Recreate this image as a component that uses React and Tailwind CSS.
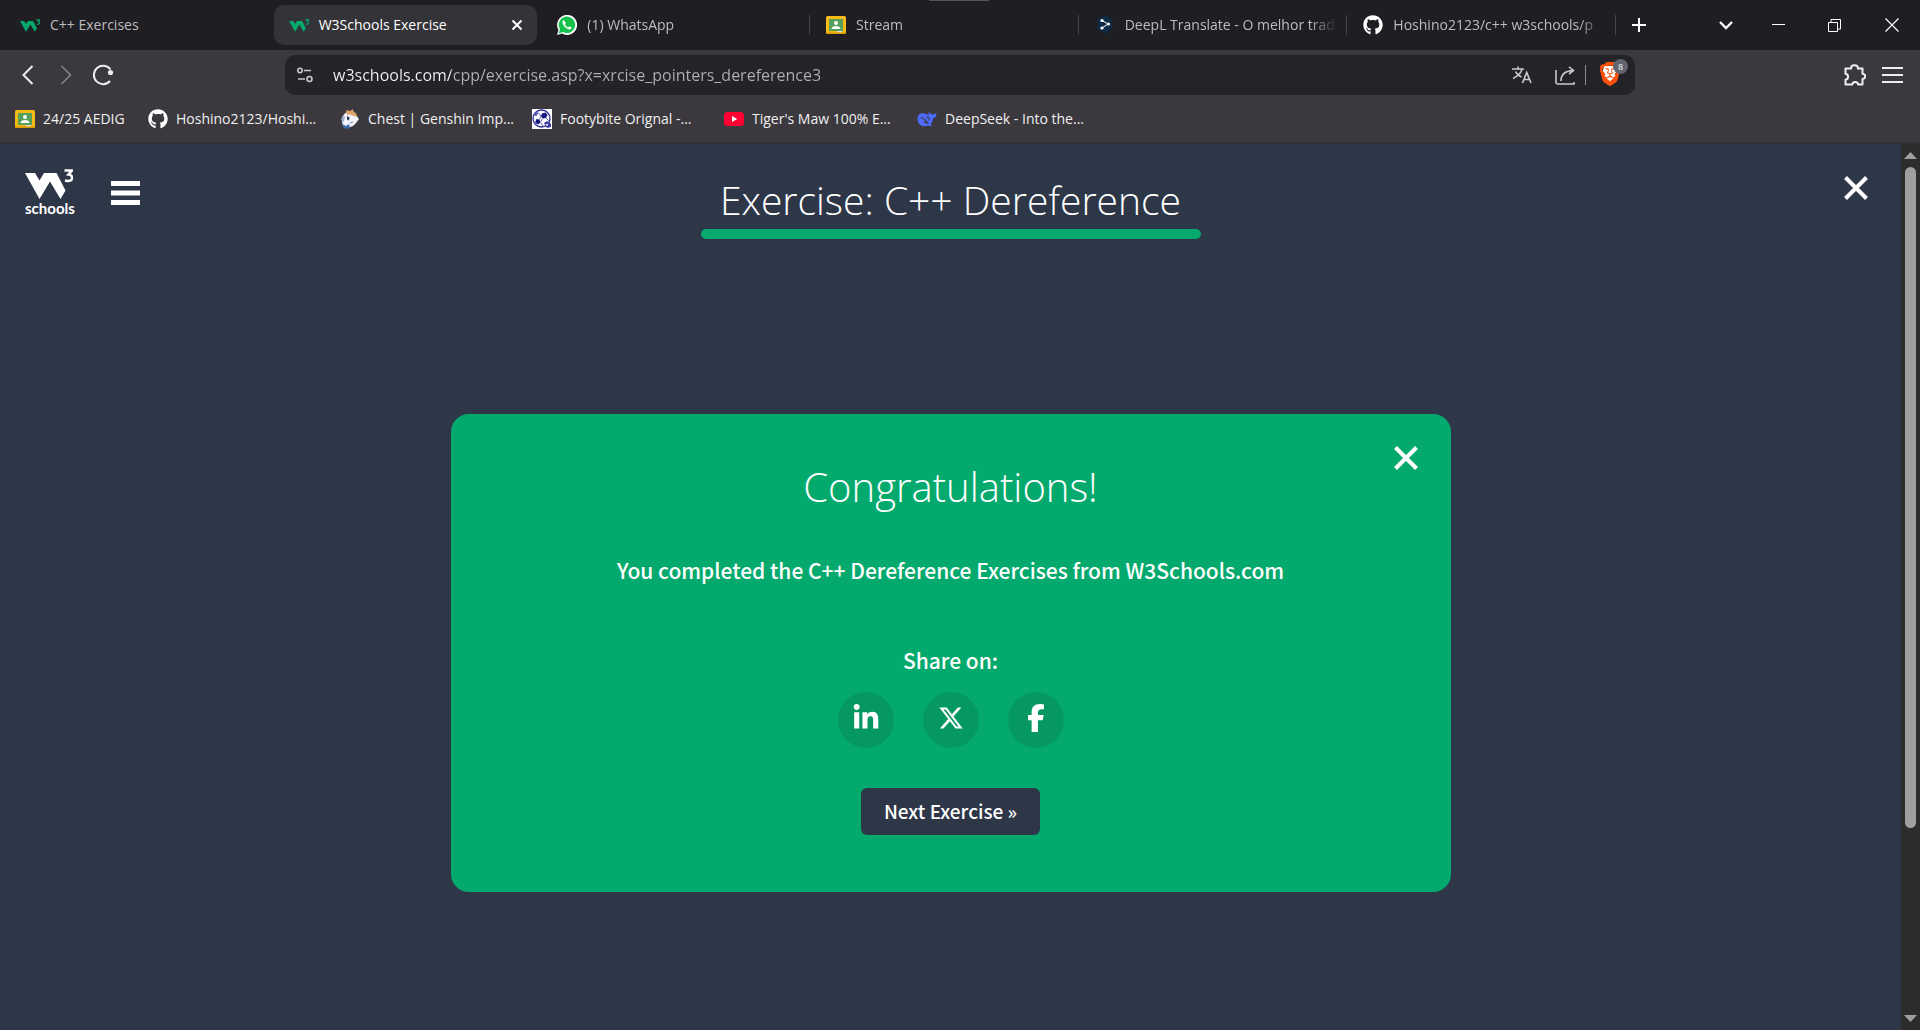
import React from "react";
import { FaGithub, FaLinkedinIn, FaXTwitter, FaFacebookF } from "react-icons/fa6";
import { SiBrave } from "react-icons/si";

function W3Mark({ className }) {
  return (
    <svg viewBox="0 0 48 30" className={className} fill="currentColor" aria-hidden="true">
      <path d="M0 4H10L14.500 11.500L19 4H31.500L40.500 21.500L35.500 30L25 12.500L14.500 30Z" />
      <path d="M39.500 1.500H47L43.500 5.500Q47.500 6 47 9.500Q46 13 40 11.500" fill="none" stroke="currentColor" strokeWidth="2.600" />
    </svg>
  );
}

const W3Icon = () => <W3Mark className="h-[15px] w-5 text-[#04aa6d]" />;

const ClassroomIcon = () => (
  <svg viewBox="0 0 20 18" className="h-[18px] w-5" aria-hidden="true">
    <rect width="20" height="18" rx="1.500" fill="#f5ba14" />
    <rect x="3" y="3" width="14" height="12" fill="#57a05a" />
    <circle cx="10" cy="7" r="2" fill="#fff" />
    <path d="M5.500 13q.5-3 4.500-3t4.500 3z" fill="#fff" />
    <path d="M11 15h5v1.500h-5z" fill="#e0e0e0" />
    <path d="M0 16.500h20V17q0 1-1.500 1H1.500Q0 18 0 17z" fill="#d99a00" />
  </svg>
);

const WhatsAppIcon = () => (
  <svg viewBox="0 0 20 20" className="size-5" aria-hidden="true">
    <path d="M0 20l1.500-5A10 10 0 1 1 5 18.500z" fill="#fff" />
    <path d="M1.800 18.200l1.200-4A8.200 8.200 0 1 1 6 17z" fill="#12c04a" />
    <path d="M7 5.300c-.7 0-1.700.8-1.500 2.300.4 3 3.500 6.400 6.700 6.800 1.300.1 2.400-.8 2.400-2l-2.300-1.200-1.100 1.200c-1.400-.5-2.700-1.700-3.300-3.200L9 8z" fill="#fff" />
  </svg>
);

const DeepLIcon = () => (
  <svg viewBox="0 0 18 20" className="h-5 w-[18px]" aria-hidden="true">
    <path d="M9 0.500l7.500 4v9L11 17v2.500L9 18l-7.500-4.500v-9z" fill="#0f2b46" />
    <path d="M6 5.500l6 3.500-6 4" fill="none" stroke="#fff" strokeWidth="1" />
    <circle cx="6" cy="5.500" r="1.600" fill="#fff" />
    <circle cx="12.500" cy="9" r="1.600" fill="#fff" />
    <circle cx="6" cy="13" r="1.600" fill="#fff" />
  </svg>
);

const GitHubIcon = () => <FaGithub className="size-5 text-white" aria-hidden="true" />;

const ChestIcon = () => (
  <svg viewBox="0 0 20 20" className="size-5" aria-hidden="true">
    <path d="M2 13Q1 7 6 3.500Q11 2 15 5L19 10L16 14L13 17Q6 20 3 17z" fill="#f3f3fb" />
    <path d="M6 1l4 1 3-2 .5 2.500L17 5l-1 .5L18 8l-4-1-4-1.500L7 6z" fill="#dda46a" />
    <path d="M1 10l3-4 1 3-2 5z" fill="#9db1cf" />
    <path d="M2 15l4 2 3-2 1 4q-5 2-7-1z" fill="#3b6db0" />
    <path d="M7 7l2.500 1.500-.5 3-2-1z" fill="#28365c" />
    <path d="M10 14l3-1" stroke="#6f7ea6" fill="none" />
  </svg>
);

const FootyIcon = () => (
  <svg viewBox="0 0 20 20" className="size-5" aria-hidden="true">
    <rect width="20" height="20" fill="#fff" />
    <circle cx="9.500" cy="9.500" r="8.500" fill="#fff" stroke="#2a2a9a" strokeWidth="1.300" />
    <path d="M10 4.500l3.500-1 2 2.500-1.500 3-3.500.5-1.500-2.500z" fill="#17177f" />
    <path d="M4.500 10l3 .5 1 3-2.500 2-3-2z" fill="#17177f" />
    <path d="M1.500 6.500L4 3l2.500.5L4.500 7z" fill="#5c5cb8" />
    <path d="M6.500 4L9 7l-1.500 3.500M10.500 9.500l-2 4 3 4M14 9l3 3" stroke="#6a6ac0" fill="none" />
    <path d="M12 14l3-2 4 3v3l-4 1z" fill="#3a3aa4" />
    <path d="M14 15h2v1.500h-2z" fill="#fff" />
  </svg>
);

const YouTubeIcon = () => (
  <svg viewBox="0 0 20 14" className="h-3.5 w-5" aria-hidden="true">
    <rect width="20" height="14" rx="3.500" fill="#ff0033" />
    <path d="M8 4l5.200 3L8 10z" fill="#fff" />
  </svg>
);

const DeepSeekIcon = () => (
  <svg viewBox="0 0 20 16" className="h-4 w-5" aria-hidden="true">
    <path d="M.5 8C.5 4 3 2 6.500 2.200c2 .2 3.500.8 5 2.300.3-1.500-.2-3 .8-3.500.8 1.500 1.700 2.300 3 2.500 1.500 0 2.700-1 4-1.500.5 3-1 5-3.300 5.500-.2 2.500-1 4.200-2.500 5.500l1.500 1.800c-1.500.5-3 .2-4-.3C6 17 .5 13.500.5 8z" fill="#4d6bfe" />
    <path d="M3.500 6.500c3 0 5 3 7.500 5.500-2 .5-3-.5-4-1.500M9.500 6.500c2-.5 3 1 3 3" fill="none" stroke="#3b393e" strokeWidth="1.100" />
  </svg>
);

const tabs = [
  { title: "C++ Exercises", Icon: W3Icon },
  { title: "W3Schools Exercise", Icon: W3Icon, active: true },
  { title: "(1) WhatsApp", Icon: WhatsAppIcon, divider: true },
  { title: "Stream", Icon: ClassroomIcon, divider: true },
  { title: "DeepL Translate - O melhor trad", Icon: DeepLIcon, divider: true },
  { title: "Hoshino2123/c++ w3schools/p", Icon: GitHubIcon, divider: true },
];

const bookmarks = [
  { title: "24/25 AEDIG", Icon: ClassroomIcon, width: "w-[133px]" },
  { title: "Hoshino2123/Hoshi...", Icon: GitHubIcon, width: "w-48" },
  { title: "Chest | Genshin Imp...", Icon: ChestIcon, width: "w-48" },
  { title: "Footybite Orignal -...", Icon: FootyIcon, width: "w-48" },
  { title: "Tiger's Maw 100% E...", Icon: YouTubeIcon, width: "w-[193px]" },
  { title: "DeepSeek - Into the...", Icon: DeepSeekIcon, width: "w-48" },
];

function Stroke({ className, children, viewBox = "0 0 20 20", width = 2 }) {
  return (
    <svg viewBox={viewBox} className={className} fill="none" stroke="currentColor" strokeWidth={width} aria-hidden="true">
      {children}
    </svg>
  );
}

function Tab({ title, Icon, active, divider }) {
  return (
    <div className="flex min-w-0 flex-1 items-center">
      <div className={active ? "mr-1 ml-px flex h-10 min-w-0 flex-1 items-center rounded-[10px] bg-[#343337] pr-3.5 pl-[15px] text-white" : "flex h-10 min-w-0 flex-1 items-center pr-1 pl-4 text-[#bdbdbf]"}>
        <button type="button" className="flex min-w-0 flex-1 items-center gap-2.5">
          <span className="flex w-5 shrink-0 justify-center"><Icon /></span>
          <span className={divider ? "min-w-0 flex-1 text-left whitespace-nowrap [mask-image:linear-gradient(to_right,black_185px,transparent_212px)]" : "min-w-0 flex-1 text-left whitespace-nowrap"}>{title}</span>
        </button>
        {active && (
          <button type="button" aria-label="Close tab" className="shrink-0">
            <Stroke viewBox="0 0 12 12" className="size-3" width={2}><path d="M1.500 1.500l9 9M10.500 1.500l-9 9" /></Stroke>
          </button>
        )}
      </div>
      {divider && <div className="h-5 w-px bg-[#434247]" />}
    </div>
  );
}

function TabStrip() {
  return (
    <header className="relative flex h-[50px] items-center bg-[#1f1e23] pl-1 text-sm">
      <div className="absolute top-0 left-[929px] h-px w-[60px] bg-[#555]" />
      <nav aria-label="Tabs" className="flex min-w-0 flex-1">
        {tabs.map((t) => <Tab key={t.title} {...t} />)}
      </nav>
      <div className="flex w-[304px] items-center text-white">
        <button type="button" aria-label="New tab" className="flex w-[46px] justify-center">
          <Stroke viewBox="0 0 14 14" className="size-3.5"><path d="M7 0v14M0 7h14" /></Stroke>
        </button>
        <button type="button" aria-label="Search tabs" className="ml-9 flex w-14 justify-center">
          <Stroke viewBox="0 0 14 10" className="h-2.5 w-3.5" width={2.4}><path d="M1 2l6 6 6-6" /></Stroke>
        </button>
        <button type="button" aria-label="Minimize" className="flex w-12 justify-center">
          <Stroke viewBox="0 0 13 13" className="size-[13px]" width={1}><path d="M0 5.500h13" /></Stroke>
        </button>
        <button type="button" aria-label="Restore" className="flex w-16 justify-center">
          <Stroke viewBox="0 0 13 13" className="size-[13px]" width={1}><path d="M.5 3.500h9v9h-9zM3 3V.5h9.500V10H10" /></Stroke>
        </button>
        <button type="button" aria-label="Close window" className="flex w-[52px] justify-center">
          <Stroke viewBox="0 0 14 14" className="size-3.5" width={1.2}><path d="M.5 .5l13 13M13.500 .5l-13 13" /></Stroke>
        </button>
      </div>
    </header>
  );
}

function Toolbar() {
  return (
    <div className="flex h-[50px] items-center bg-[#3b393e] text-[#eeeeee]">
      <div className="flex w-[285px] items-center gap-[26px] pl-[22px]">
        <button type="button" aria-label="Back"><Stroke viewBox="0 0 12 20" className="h-5 w-3"><path d="M10.500 1L1.500 10l9 9" /></Stroke></button>
        <button type="button" aria-label="Forward" className="text-[#858488]"><Stroke viewBox="0 0 12 20" className="h-5 w-3" width={1.6}><path d="M1.500 1l9 9-9 9" /></Stroke></button>
        <button type="button" aria-label="Reload" className="-ml-1.5">
          <Stroke viewBox="0 0 22 22" className="size-[22px]"><path d="M18 17A9.200 9.200 0 1 1 18.500 5.500" /><circle cx="18.500" cy="8.500" r="2.600" fill="currentColor" stroke="none" /></Stroke>
        </button>
      </div>
      <div className="flex h-10 min-w-0 flex-1 items-center rounded-[10px] bg-[#242328] pr-[7px] pl-3 text-[#c9c9cb]">
        <button type="button" aria-label="Site information">
          <Stroke viewBox="0 0 16 16" className="size-4" width={1.6}><circle cx="3" cy="3.500" r="2.200" /><path d="M7 3.500h7M1 12h7" /><circle cx="12.500" cy="12" r="2.500" /></Stroke>
        </button>
        <input
          aria-label="Address"
          className="ml-5 min-w-0 flex-1 bg-[linear-gradient(to_right,#f4f4f4_118px,#b0b0b2_118px)] bg-clip-text text-base text-transparent outline-none"
          defaultValue="w3schools.com/cpp/exercise.asp?x=xrcise_pointers_dereference3"
        />
        <div className="flex items-center">
          <button type="button" aria-label="Translate">
            <Stroke viewBox="0 0 20 18" className="h-[18px] w-5" width={1.6}><path d="M0 3h12M6 .5V3M10 3.500Q8 9 1 12.500M3.500 5.500q2 4 6 5.500M10.500 17L14.700 6.500 19 17M12 13.500h5.500" /></Stroke>
          </button>
          <button type="button" aria-label="Share" className="ml-[23px]">
            <Stroke viewBox="0 0 20 19" className="h-[19px] w-5" width={1.6}><path d="M1 4v12q0 2 2 2h16v-2M6 15q0-10 12-10.500M14 .8l4.500 3.700L14 8" /></Stroke>
          </button>
          <div className="mr-3 ml-2.5 h-5 w-px bg-[#8a898d]" />
          <button type="button" aria-label="Brave Shields" className="relative ml-0.5 h-6 w-7">
            <svg viewBox="0 0 20 24" className="h-6 w-5" aria-hidden="true"><path d="M4 3h12l2 8-3 7-5 4-5-4-3-7z" fill="#fff" /></svg>
            <SiBrave className="absolute -top-px -left-0.5 size-6 text-[#fb4f0a]" aria-hidden="true" />
            <span className="absolute -top-1 left-[13px] flex size-[15px] items-center justify-center rounded-full bg-[#62646f] text-[9px] font-semibold text-[#dddddd]">8</span>
          </button>
        </div>
      </div>
      <div className="flex w-[285px] items-center justify-end gap-4 pr-[17px]">
        <button type="button" aria-label="Extensions">
          <Stroke viewBox="0 0 22 22" className="size-[22px]"><path strokeLinejoin="round" d="M1.500 4.500h5.700q-.4-3.300 3.300-3.300t3.300 3.300H18.500v5.200q2.700.3 2.700 2.600t-2.700 2.700V20.500h-4.300q-.2-2.600-2.900-2.600t-3 2.600H1.500v-4.800q2.600-.4 2.600-3t-2.600-3z" /></Stroke>
        </button>
        <button type="button" aria-label="Menu">
          <Stroke viewBox="0 0 21 16" className="h-4 w-[21px]"><path d="M0 1h21M0 8h21M0 15h21" /></Stroke>
        </button>
      </div>
    </div>
  );
}

function Bookmarks() {
  return (
    <nav aria-label="Bookmarks" className="flex h-[44px] items-center border-b-2 border-[#302f34] bg-[#3b393e] pb-1 pl-[15px] text-sm text-[#f0f0f0]">
      {bookmarks.map(({ title, Icon, width }) => (
        <div key={title} className={width}>
          <a href="#" className="flex items-center gap-2 whitespace-nowrap">
            <span className="flex w-5 justify-center"><Icon /></span>
            {title}
          </a>
        </div>
      ))}
    </nav>
  );
}

const CloseMark = () => (
  <Stroke viewBox="0 0 24 24" className="size-6" width={4}><path d="M1.500 1.500l21 21M22.500 1.500l-21 21" /></Stroke>
);

function ShareButton({ label, children }) {
  return (
    <a href="#" aria-label={label} className="flex size-14 items-center justify-center rounded-full bg-[#059862] pb-1 text-white">
      {children}
    </a>
  );
}

function Exercise() {
  return (
    <main className="flex min-w-0 flex-1 flex-col items-center bg-[#2e3748] text-white">
      <div className="flex w-full items-start justify-between px-[25px] pt-[25px]">
        <div className="flex flex-1 items-start gap-9">
          <a href="#" className="flex flex-col text-white">
            <W3Mark className="h-[30px] w-12" />
            <span className="font-['Lato',sans-serif] text-[15px] leading-[18px] font-bold">schools</span>
          </a>
          <button type="button" aria-label="Open menu" className="mt-3">
            <Stroke viewBox="0 0 29 24" className="h-6 w-[29px]" width={5}><path d="M0 2.500h29M0 12h29M0 21.500h29" /></Stroke>
          </button>
        </div>
        <h1 className="w-[500px] pt-0.5 text-center text-[39px] leading-[58px] font-light">
          Exercise: C++ Dereference
          <span className="block h-2.5 rounded-full bg-[#04aa6d]" />
        </h1>
        <div className="flex flex-1 justify-end pt-[7px]">
          <button type="button" aria-label="Close exercise" className="mr-2"><CloseMark /></button>
        </div>
      </div>
      <section className="relative mt-[175px] flex w-full max-w-[1000px] flex-col items-center rounded-[18px] bg-[#04aa6d] pt-[43px] pb-[57px]">
        <button type="button" aria-label="Close message" className="absolute top-8 right-[33px]"><CloseMark /></button>
        <h2 className="text-[40px] leading-[60px] font-light">Congratulations!</h2>
        <p className="mt-[38px] font-['Noto_Sans_CJK_SC',sans-serif] text-[21px] leading-[30px] font-medium">You completed the C++ Dereference Exercises from W3Schools.com</p>
        <p className="mt-[60px] font-['Noto_Sans_CJK_SC',sans-serif] text-[21px] leading-[30px] font-medium">Share on:</p>
        <div className="mt-[17px] flex gap-[29px]">
          <ShareButton label="LinkedIn"><FaLinkedinIn className="size-7" /></ShareButton>
          <ShareButton label="X"><FaXTwitter className="size-[26px]" /></ShareButton>
          <ShareButton label="Facebook"><FaFacebookF className="size-7" /></ShareButton>
        </div>
        <button type="button" className="mt-10 h-[47px] rounded-md bg-[#2e3748] px-[23px] font-['Noto_Sans_CJK_SC',sans-serif] text-[19px] font-medium">Next Exercise »</button>
      </section>
    </main>
  );
}

function ScrollTrack() {
  return (
    <div className="flex w-[19px] flex-col items-center bg-[#2c2c2c] py-2" aria-hidden="true">
      <svg viewBox="0 0 13 7" className="h-[7px] w-[13px]"><path d="M0 7L6.500 0 13 7z" fill="#9f9f9f" /></svg>
      <div className="mt-2 flex w-[11px] flex-1 flex-col">
        <div className="h-[78%] rounded-full bg-[#9f9f9f]" />
      </div>
      <svg viewBox="0 0 13 7" className="h-[7px] w-[13px]"><path d="M0 0h13L6.500 7z" fill="#9f9f9f" /></svg>
    </div>
  );
}

export default function App() {
  return (
    <div className="flex min-h-screen flex-col bg-[#2e3748] font-['Open_Sans',sans-serif]">
      <TabStrip />
      <Toolbar />
      <Bookmarks />
      <div className="flex flex-1">
        <Exercise />
        <ScrollTrack />
      </div>
    </div>
  );
}
